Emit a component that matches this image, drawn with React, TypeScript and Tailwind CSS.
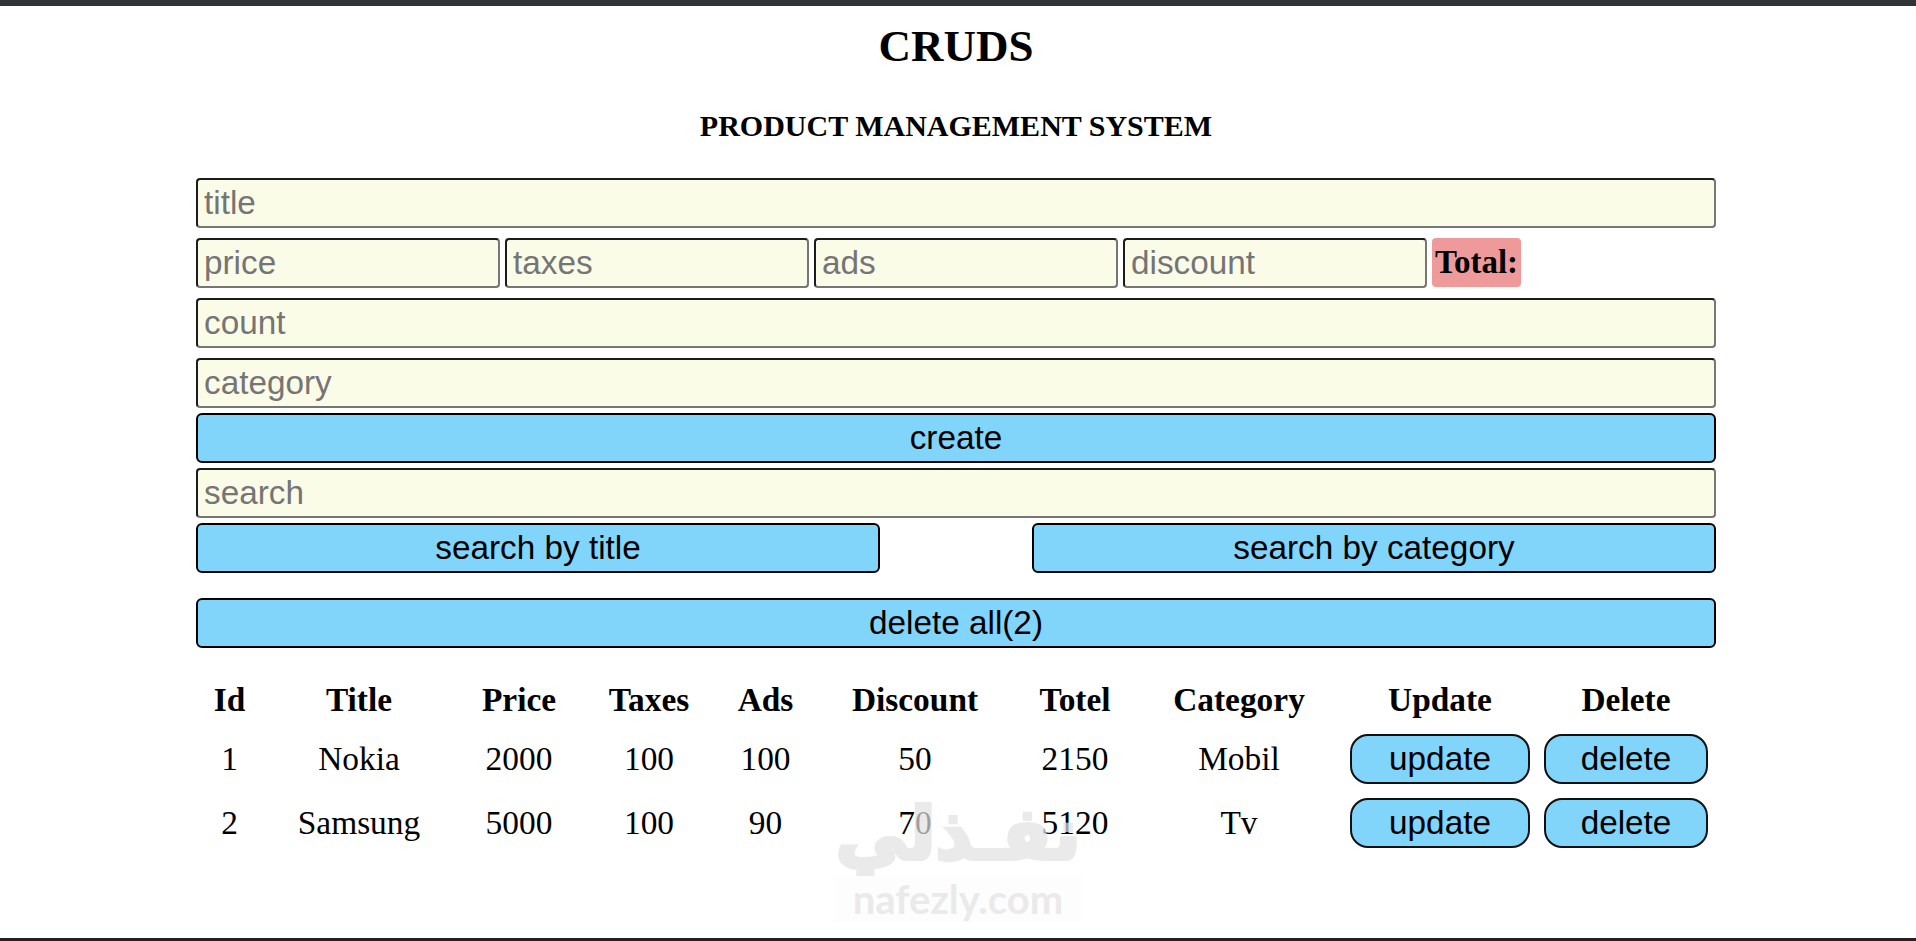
const products = [
  { id: 1, title: 'Nokia', price: 2000, taxes: 100, ads: 100, discount: 50, total: 2150, category: 'Mobil' },
  { id: 2, title: 'Samsung', price: 5000, taxes: 100, ads: 90, discount: 70, total: 5120, category: 'Tv' },
]

const headers = ['Id', 'Title', 'Price', 'Taxes', 'Ads', 'Discount', 'Totel', 'Category', 'Update', 'Delete']

const inputClass =
  "h-[50px] rounded-[4px] border-2 border-t-[#1c1c1c] border-l-[#1c1c1c] border-r-[#767676] border-b-[#767676] bg-[#fbfce8] pl-[6px] text-[33.3px] text-black outline-none placeholder:text-[#757575] font-['Liberation_Sans',sans-serif]"

const buttonClass =
  "h-[50px] rounded-[6px] border-2 border-black bg-[#81d4fa] pb-[1px] text-[33.3px] leading-[36px] text-black font-['Liberation_Sans',sans-serif]"

const rowButtonClass =
  "mx-auto block h-[50px] rounded-[18px] border-2 border-[#111] bg-[#81d4fa] pb-[1px] text-[33.3px] leading-[36px] text-black font-['Liberation_Sans',sans-serif]"

export default function App() {
  return (
    <div className="relative flex min-h-screen flex-col bg-white font-['Liberation_Serif',serif] text-black">
      <div className="h-[6px] bg-[#2f3437]" />

      <main className="ml-[196px] w-[1520px] flex-1">
        <h1 className="mt-[17px] text-center text-[45px] leading-[46px] font-bold">CRUDS</h1>
        <h2 className="mt-[39px] text-center text-[30px] leading-[36px] font-bold">PRODUCT MANAGEMENT SYSTEM</h2>

        <div className="mt-[34px] flex flex-col">
          <input className={`${inputClass} w-full`} placeholder="title" />
          <div className="mt-[10px] flex gap-[5px]">
            <input className={`${inputClass} w-[304px]`} placeholder="price" />
            <input className={`${inputClass} w-[304px]`} placeholder="taxes" />
            <input className={`${inputClass} w-[304px]`} placeholder="ads" />
            <input className={`${inputClass} w-[304px]`} placeholder="discount" />
            <small className="flex h-[49px] w-[89px] items-center justify-center rounded-[4px] bg-[#ef9a9a] text-[33px] font-bold">
              Total:
            </small>
          </div>
          <input className={`${inputClass} mt-[10px] w-full`} placeholder="count" />
          <input className={`${inputClass} mt-[10px] w-full`} placeholder="category" />
          <button className={`${buttonClass} mt-[5px] w-full`}>create</button>
          <input className={`${inputClass} mt-[5px] w-full`} placeholder="search" />
          <div className="mt-[5px] flex justify-between">
            <button className={`${buttonClass} w-[684px]`}>search by title</button>
            <button className={`${buttonClass} w-[684px]`}>search by category</button>
          </div>
          <button className={`${buttonClass} mt-[25px] w-full`}>delete all(2)</button>
        </div>

        <table className="mt-[26px] w-[1518px] table-fixed border-collapse text-center text-[33.4px]">
          <colgroup>
            <col className="w-[67px]" />
            <col className="w-[192px]" />
            <col className="w-[128px]" />
            <col className="w-[132px]" />
            <col className="w-[101px]" />
            <col className="w-[198px]" />
            <col className="w-[122px]" />
            <col className="w-[206px]" />
            <col className="w-[196px]" />
            <col className="w-[176px]" />
          </colgroup>
          <thead>
            <tr className="h-[53px]">
              {headers.map((h) => (
                <th key={h} className="p-0 font-bold">{h}</th>
              ))}
            </tr>
          </thead>
          <tbody>
            {products.map((p) => (
              <tr key={p.id} className="h-[64px]">
                <td className="p-0">{p.id}</td>
                <td className="p-0">{p.title}</td>
                <td className="p-0">{p.price}</td>
                <td className="p-0">{p.taxes}</td>
                <td className="p-0">{p.ads}</td>
                <td className="p-0">{p.discount}</td>
                <td className="p-0">{p.total}</td>
                <td className="p-0">{p.category}</td>
                <td className="p-0">
                  <button className={`${rowButtonClass} w-[180px]`}>update</button>
                </td>
                <td className="p-0">
                  <button className={`${rowButtonClass} w-[164px]`}>delete</button>
                </td>
              </tr>
            ))}
          </tbody>
        </table>
      </main>

      <div className="h-[3px] bg-[#222]" />

      {/* nafezly watermark */}
      <div className="pointer-events-none absolute top-[794px] left-[835px] flex w-[246px] flex-col items-center text-[#e2e2e2] opacity-70">
        <span dir="rtl" className="text-[72px] leading-[80px] font-bold font-['DejaVu_Sans',sans-serif] [-webkit-text-stroke:4px_#e2e2e2]">نفـذلي</span>
        <span className="mt-[2px] w-full bg-[#fdfdfd] text-center text-[40px] leading-[46px] font-bold font-['Lato',sans-serif]">nafezly.com</span>
      </div>
    </div>
  )
}
